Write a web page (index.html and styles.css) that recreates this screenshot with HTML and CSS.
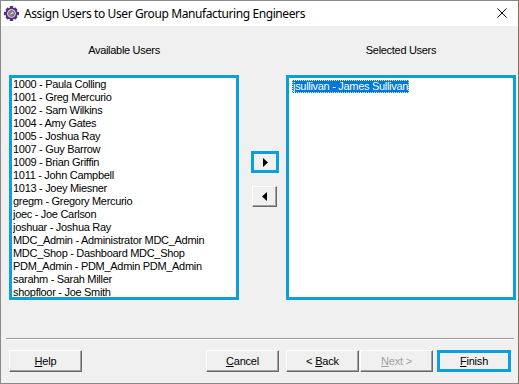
FILE: index.html
```html
<!DOCTYPE html>
<html lang="en">
<head>
    <meta charset="UTF-8">
    <title>Assign Users to User Group Manufacturing Engineers</title>
    <link rel="stylesheet" href="styles.css">
</head>
<body>
    <div class="window">
        <div class="titlebar">
            <svg class="app-icon" width="15" height="15" viewBox="0 0 15 15">
                <g fill="#5b2a86">
                    <rect x="5.8" y="0" width="3.4" height="15"/>
                    <rect x="0" y="5.8" width="15" height="3.4"/>
                    <rect x="5.8" y="0.5" width="3.4" height="14" transform="rotate(45 7.5 7.5)"/>
                    <rect x="5.8" y="0.5" width="3.4" height="14" transform="rotate(-45 7.5 7.5)"/>
                    <circle cx="7.5" cy="7.5" r="6"/>
                </g>
                <circle cx="7.5" cy="7.5" r="4.3" fill="#f4f4f4"/>
                <circle cx="7.5" cy="7.5" r="3.5" fill="#7d7d7d"/>
                <path d="M5.3 9.3 L8.4 5.5 L9.7 6.9 Z" fill="#d8d8d8"/>
            </svg>
            <span class="title">Assign Users to User Group Manufacturing Engineers</span>
            <svg class="close-icon" width="10" height="10" viewBox="0 0 10 10">
                <path d="M0.5 0.5 L9.5 9.5 M9.5 0.5 L0.5 9.5" stroke="#000" stroke-width="1"/>
            </svg>
        </div>

        <div class="content">
            <div class="picker">
                <div class="caption">Available Users</div>
                <div></div>
                <div class="caption">Selected Users</div>

                <div class="listbox">
                    <div class="item">1000 - Paula Colling</div>
                    <div class="item">1001 - Greg Mercurio</div>
                    <div class="item">1002 - Sam Wilkins</div>
                    <div class="item">1004 - Amy Gates</div>
                    <div class="item">1005 - Joshua Ray</div>
                    <div class="item">1007 - Guy Barrow</div>
                    <div class="item">1009 - Brian Griffin</div>
                    <div class="item">1011 - John Campbell</div>
                    <div class="item">1013 - Joey Miesner</div>
                    <div class="item">gregm - Gregory Mercurio</div>
                    <div class="item">joec - Joe Carlson</div>
                    <div class="item">joshuar - Joshua Ray</div>
                    <div class="item">MDC_Admin - Administrator MDC_Admin</div>
                    <div class="item">MDC_Shop - Dashboard MDC_Shop</div>
                    <div class="item">PDM_Admin - PDM_Admin PDM_Admin</div>
                    <div class="item">sarahm - Sarah Miller</div>
                    <div class="item">shopfloor - Joe Smith</div>
                </div>

                <div class="mover">
                    <button class="btn arrow focused">
                        <svg width="5" height="9" viewBox="0 0 5 9"><path d="M0 0 L5 4.5 L0 9 Z" fill="#000"/></svg>
                    </button>
                    <button class="btn arrow">
                        <svg width="5" height="9" viewBox="0 0 5 9"><path d="M5 0 L0 4.5 L5 9 Z" fill="#000"/></svg>
                    </button>
                </div>

                <div class="listbox">
                    <span class="item selected">jsullivan - James Sullivan</span>
                </div>
            </div>

            <div class="separator"></div>

            <div class="actions">
                <button class="btn"><span><u>H</u>elp</span></button>
                <button class="btn cancel"><span><u>C</u>ancel</span></button>
                <button class="btn back"><span>&lt; <u>B</u>ack</span></button>
                <button class="btn next" disabled><span><u>N</u>ext &gt;</span></button>
                <button class="btn finish focused"><span><u>F</u>inish</span></button>
            </div>
        </div>
    </div>
</body>
</html>
```

FILE: styles.css
```css
body {
    margin: 0;
    background: #f0f0f0;
    font-family: "Liberation Sans", Arial, sans-serif;
    font-size: 11px;
    letter-spacing: -0.3px;
    color: #000;
}
.window {
    width: 519px;
    height: 384px;
    box-sizing: border-box;
    border: 1px solid #8a8a8a;
    border-right-color: #7d7650;
    background: #f0f0f0;
    display: flex;
    flex-direction: column;
}
.titlebar {
    height: 25px;
    background: #fff;
    display: flex;
    align-items: center;
    flex-shrink: 0;
}
.app-icon {
    margin-left: 3px;
    margin-top: -1px;
}
.title {
    margin-left: 5px;
    font-family: "Noto Sans", sans-serif;
    font-size: 12px;
    letter-spacing: -0.4px;
    margin-top: -1px;
}
.close-icon {
    margin-left: auto;
    margin-right: 11px;
    margin-top: -1px;
}
.content {
    padding: 18px 2px 0 8px;
}
.picker {
    display: grid;
    grid-template-columns: 230px 47px 230px;
    grid-template-rows: 13px 225px;
    row-gap: 18px;
}
.caption {
    text-align: center;
    line-height: 13px;
}
.listbox {
    border: 3px solid #0aa0e0;
    background: #fff;
    padding: 0 1px;
    overflow: hidden;
}
.item {
    line-height: 13px;
    white-space: nowrap;
}
.item.selected {
    display: inline-block;
    margin: 2px 0 0 2px;
    padding: 0 1px;
    background: #0078d7;
    color: #fff;
    outline: 1px dotted #e8e8a0;
    outline-offset: -1px;
}
.mover {
    display: flex;
    flex-direction: column;
    align-items: flex-start;
    padding-top: 76px;
}
.btn {
    box-sizing: border-box;
    height: 22px;
    width: 73px;
    padding: 0;
    background: #f0f0f0;
    border: 1px solid;
    border-color: #fff #696969 #696969 #fff;
    box-shadow: inset -1px -1px 0 #a0a0a0;
    font-family: "Liberation Sans", Arial, sans-serif;
    font-size: 11px;
    letter-spacing: -0.2px;
    color: #000;
    display: flex;
    align-items: center;
    justify-content: center;
}
.btn u {
    text-decoration-thickness: 1px;
    text-underline-offset: 1px;
}
.btn.focused {
    border: 3px solid #0aa0e0;
    box-shadow: none;
}
.arrow {
    width: 25px;
    height: 21px;
    margin-left: 13px;
}
.arrow.focused {
    width: 28px;
    height: 22px;
    margin-left: 12px;
    margin-bottom: 13px;
}
.separator {
    margin: 38px 0 0 -3px;
    width: 508px;
    border-top: 1px solid #a0a0a0;
    border-bottom: 1px solid #fff;
}
.actions {
    display: flex;
    margin-top: 10px;
}
.cancel {
    margin-left: auto;
}
.back {
    margin-left: 7px;
}
.next {
    margin-left: 1px;
    color: #a0a0a0;
}
.finish {
    width: 74px;
    margin-left: 4px;
    margin-right: 5px;
}
```
